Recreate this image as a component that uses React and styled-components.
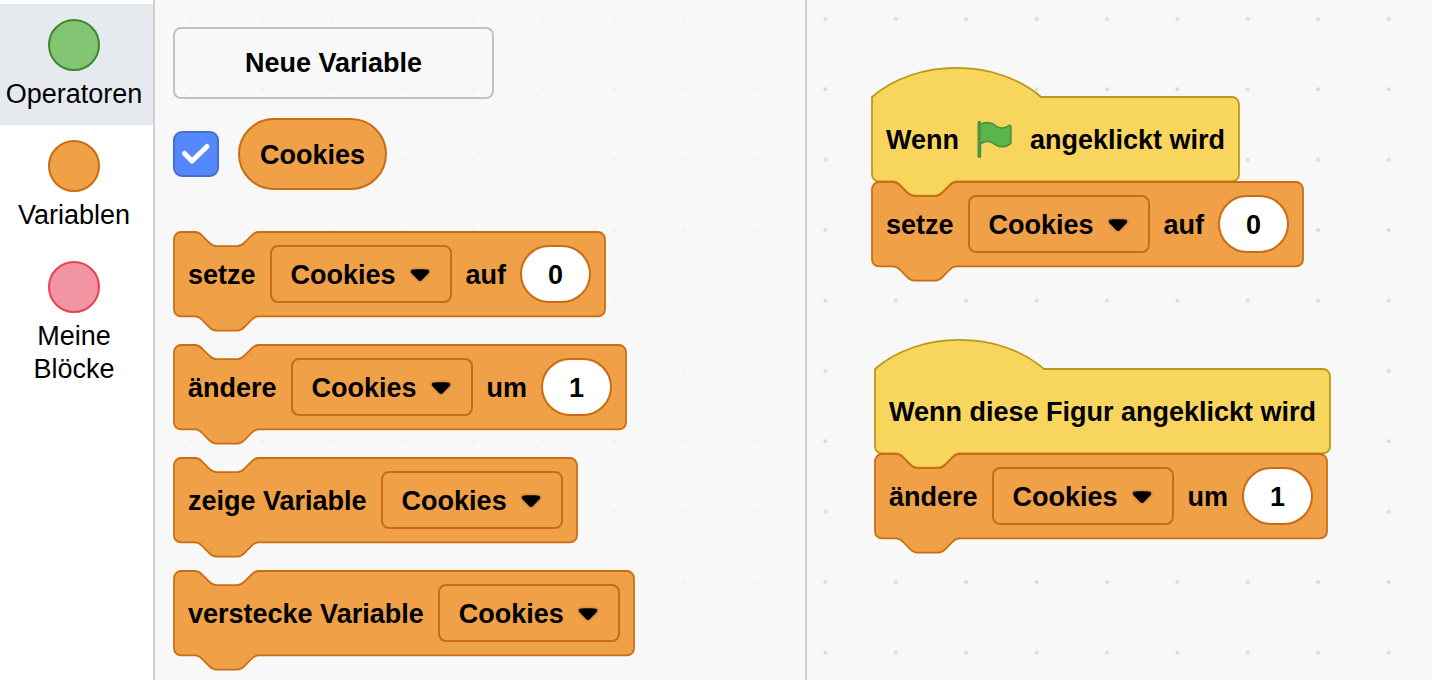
import React, { useLayoutEffect, useRef, useState } from "react";
import styled, { createGlobalStyle, ThemeProvider } from "styled-components";

const theme = {
  font: '"Liberation Sans", Arial, sans-serif',
  border: "#d0d0d0",
  variables: { fill: "#f0a046", line: "#c96c12" },
  events: { fill: "#f8d65d", line: "#bb9716" },
};

/* One block unit in screen pixels at the current zoom level. */
const SCALE = 1.76;

const GlobalStyle = createGlobalStyle`
  *, *::before, *::after { box-sizing: border-box; }
  body { margin: 0; background: #f8f8f8; color: #000; }
  button, input, select { font: inherit; color: inherit; margin: 0; }
`;

const Editor = styled.div`
  position: relative;
  isolation: isolate;
  display: flex;
  min-height: 100vh;
  overflow: hidden;
  font-family: ${(p) => p.theme.font};
  font-size: 27px;
  line-height: 33px;
`;

const Grid = styled.svg`
  position: absolute;
  inset: 0;
  z-index: -1;
  width: 100%;
  height: 100%;
`;

const Categories = styled.nav`
  flex: 0 0 155px;
  display: flex;
  flex-direction: column;
  padding-top: 4px;
  background: #fff;
  border-right: 2px solid ${(p) => p.theme.border};
`;

const Category = styled.button`
  display: flex;
  flex-direction: column;
  align-items: center;
  gap: 7px;
  padding: 15px 5px 14px 0;
  border: 0;
  background: ${(p) => (p.$selected ? "#e6e9ee" : "transparent")};
  cursor: pointer;
`;

const Bubble = styled.span`
  width: 52px;
  height: 52px;
  border: 2px solid ${(p) => p.$line};
  border-radius: 50%;
  background: ${(p) => p.$fill};
`;

const Palette = styled.section`
  flex: 0 0 652px;
  display: flex;
  flex-direction: column;
  align-items: flex-start;
  padding: 27px 18px 20px;
  background: rgba(248, 248, 248, 0.8);
  border-right: 2px solid ${(p) => p.theme.border};
`;

const NewVariable = styled.button`
  width: 321px;
  height: 72px;
  padding-top: 2px;
  border: 2px solid #c1c1c1;
  border-radius: 8px;
  background: transparent;
  font-weight: bold;
  cursor: pointer;
`;

const VariableRow = styled.div`
  display: flex;
  align-items: center;
  gap: 19px;
  margin: 19px 0 41px;
`;

const CheckBox = styled.span`
  display: grid;
  width: 46px;
  height: 46px;

  > * { grid-area: 1 / 1; }
  > svg { pointer-events: none; visibility: hidden; }
  > input:checked + svg { visibility: visible; }
`;

const CheckInput = styled.input`
  appearance: none;
  width: 46px;
  height: 46px;
  border: 2px solid #4470c8;
  border-radius: 9px;
  background: #fff;

  &:checked { background: #5588ff; }
`;

const Reporter = styled.label`
  display: flex;
  align-items: center;
  height: 72px;
  padding: 2px 20px 0;
  border: 2px solid ${(p) => p.theme.variables.line};
  border-radius: 36px;
  background: ${(p) => p.theme.variables.fill};
  font-weight: bold;
`;

const BlockList = styled.div`
  display: flex;
  flex-direction: column;
  align-items: flex-start;
  gap: 27px;
`;

const BlockBody = styled.div`
  position: relative;
  isolation: isolate;
  display: flex;
  align-items: center;
  gap: 14px;
  height: 86px;
  padding: 0 15px;
  font-weight: bold;
  white-space: nowrap;
`;

const Label = styled.span`
  padding-top: 2px;
`;

const Outline = styled.svg`
  position: absolute;
  inset: 0;
  z-index: -1;
  width: 100%;
  height: 100%;
  overflow: visible;
`;

const DropDown = styled.span`
  display: grid;
  align-items: center;

  > * { grid-area: 1 / 1; }
  > svg {
    justify-self: end;
    margin: 2px 21px 0 0;
    pointer-events: none;
  }
`;

const DropDownSelect = styled.select`
  appearance: none;
  height: 58px;
  padding: 2px 53px 0 19px;
  border: 2px solid ${(p) => p.theme.variables.line};
  border-radius: 8px;
  background: transparent;
`;

const NumberField = styled.input`
  width: 71px;
  height: 58px;
  padding: 2px 0 0;
  border: 2px solid ${(p) => p.theme.variables.line};
  border-radius: 29px;
  background: #fff;
  text-align: center;
`;

const Workspace = styled.main`
  position: relative;
  flex: 1;
`;

const Script = styled.div`
  position: absolute;
  left: ${(p) => p.$x}px;
  top: ${(p) => p.$y}px;
  display: flex;
  flex-direction: column;
  align-items: flex-start;

  > * + * { margin-top: -1px; }
`;

const NOTCH =
  "c 2,0 3,1 4,2 l 4,4 c 1,1 2,2 4,2 h 12 c 2,0 3,-1 4,-2 l 4,-4 c 1,-1 2,-2 4,-2";
const TAB =
  "c -2,0 -3,1 -4,2 l -4,4 c -1,1 -2,2 -4,2 h -12 c -2,0 -3,-1 -4,-2 l -4,-4 c -1,-1 -2,-2 -4,-2";

function blockPath(width, hat) {
  const top = hat
    ? "M 0,0 c 25,-22 71,-22 96,0"
    : `M 0,4 A 4,4 0 0,1 4,0 H 12 ${NOTCH}`;
  return `${top} H ${width - 4} a 4,4 0 0,1 4,4 v 40 a 4,4 0 0,1 -4,4 H 48 ${TAB} H 4 a 4,4 0 0,1 -4,-4 z`;
}

function Block({ hat = false, children }) {
  const ref = useRef(null);
  const [width, setWidth] = useState(0);

  useLayoutEffect(() => {
    const measure = () => setWidth(ref.current.offsetWidth);
    measure();
    const observer = new ResizeObserver(measure);
    observer.observe(ref.current);
    return () => observer.disconnect();
  }, []);

  const colors = hat ? theme.events : theme.variables;
  return (
    <BlockBody ref={ref}>
      <Outline aria-hidden="true">
        {width > 0 && (
          <path
            transform={`translate(1 1) scale(${SCALE})`}
            d={blockPath((width - 2) / SCALE, hat)}
            fill={colors.fill}
            stroke={colors.line}
          />
        )}
      </Outline>
      {children}
    </BlockBody>
  );
}

function VariableMenu() {
  return (
    <DropDown>
      <DropDownSelect aria-label="Variable">
        <option>Cookies</option>
      </DropDownSelect>
      <svg width="22" height="16" viewBox="0 0 12.71 8.79" aria-hidden="true">
        <path
          fill="#231f20"
          opacity="0.1"
          d="M12.71,2.44A2.41,2.41,0,0,1,12,4.16L8.08,8.08a2.45,2.45,0,0,1-3.45,0L.72,4.16A2.42,2.42,0,0,1,0,2.44,2.48,2.48,0,0,1,.71.71C1,.47,1.43,0,6.36,0S11.75.46,12,.71A2.44,2.44,0,0,1,12.71,2.44Z"
        />
        <path d="M6.36,7.79a1.43,1.43,0,0,1-1-.42L1.42,3.45a1.44,1.44,0,0,1,0-2c.56-.56,9.31-.56,9.87,0a1.44,1.44,0,0,1,0,2L7.37,7.37A1.43,1.43,0,0,1,6.36,7.79Z" />
      </svg>
    </DropDown>
  );
}

function GreenFlag() {
  return (
    <svg width="43" height="43" viewBox="0 0 24 24" role="img" aria-label="grüne Flagge">
      <path
        fill="#4d9440"
        d="M20.8,3.7c-0.4-0.2-0.9-0.1-1.2,0.2c-2,1.6-4.8,1.6-6.8,0c-2.3-1.9-5.6-2.3-8.3-1v-0.4c0-0.6-0.5-1-1-1s-1,0.4-1,1v18.8c0,0.5,0.5,1,1,1h0.1c0.5,0,1-0.5,1-1v-6.4c1-0.7,2.1-1.2,3.4-1.3c1.2,0,2.4,0.4,3.4,1.2c2.9,2.3,7,2.3,9.8,0c0.3-0.2,0.4-0.5,0.4-0.9V4.7C21.6,4.2,21.3,3.8,20.8,3.7z"
      />
      <path
        fill="#5cb54c"
        d="M20.6,4.8l-0.1,9.1c-2.5,2-6.1,2-8.7,0c-1.2-1-2.6-1.4-4-1.4c-1.2,0-2.3,0.5-3.4,1.1V4c2.5-1.4,5.5-1.1,7.7,0.6c2.4,1.9,5.7,1.9,8.1,0h0.2L20.6,4.8z"
      />
    </svg>
  );
}

function SetBlock() {
  return (
    <Block>
      <Label>setze</Label>
      <VariableMenu />
      <Label>auf</Label>
      <NumberField aria-label="auf" defaultValue="0" />
    </Block>
  );
}

function ChangeBlock() {
  return (
    <Block>
      <Label>ändere</Label>
      <VariableMenu />
      <Label>um</Label>
      <NumberField aria-label="um" defaultValue="1" />
    </Block>
  );
}

const categories = [
  { name: "Operatoren", fill: "#82c572", line: "#40872d", selected: true },
  { name: "Variablen", fill: "#f0a046", line: "#c96c12" },
  { name: "Meine Blöcke", fill: "#f295a3", line: "#ea4155" },
];

export default function App() {
  return (
    <ThemeProvider theme={theme}>
      <GlobalStyle />
      <Editor>
        <Grid aria-hidden="true">
          <pattern
            id="dots"
            x="16"
            y="-16"
            width={40 * SCALE}
            height={40 * SCALE}
            patternUnits="userSpaceOnUse"
          >
            <circle cx="35" cy="35" r="2" fill="#dcdcdc" />
          </pattern>
          <rect width="100%" height="100%" fill="url(#dots)" />
        </Grid>

        <Categories>
          {categories.map((c) => (
            <Category key={c.name} type="button" $selected={c.selected}>
              <Bubble $fill={c.fill} $line={c.line} />
              {c.name}
            </Category>
          ))}
        </Categories>

        <Palette>
          <NewVariable type="button">Neue Variable</NewVariable>
          <VariableRow>
            <CheckBox>
              <CheckInput id="show-cookies" type="checkbox" defaultChecked />
              <svg width="46" height="46" viewBox="0 0 46 46" aria-hidden="true">
                <path
                  d="M11.5 22.5 L19 30 L34 15.5"
                  fill="none"
                  stroke="#fff"
                  strokeWidth="5"
                  strokeLinecap="round"
                  strokeLinejoin="round"
                />
              </svg>
            </CheckBox>
            <Reporter htmlFor="show-cookies">Cookies</Reporter>
          </VariableRow>
          <BlockList>
            <SetBlock />
            <ChangeBlock />
            <Block>
              <Label>zeige Variable</Label>
              <VariableMenu />
            </Block>
            <Block>
              <Label>verstecke Variable</Label>
              <VariableMenu />
            </Block>
          </BlockList>
        </Palette>

        <Workspace>
          <Script $x={64} $y={96}>
            <Block hat>
              <Label>Wenn</Label>
              <GreenFlag />
              <Label>angeklickt wird</Label>
            </Block>
            <SetBlock />
          </Script>
          <Script $x={67} $y={368}>
            <Block hat>
              <Label>Wenn diese Figur angeklickt wird</Label>
            </Block>
            <ChangeBlock />
          </Script>
        </Workspace>
      </Editor>
    </ThemeProvider>
  );
}
